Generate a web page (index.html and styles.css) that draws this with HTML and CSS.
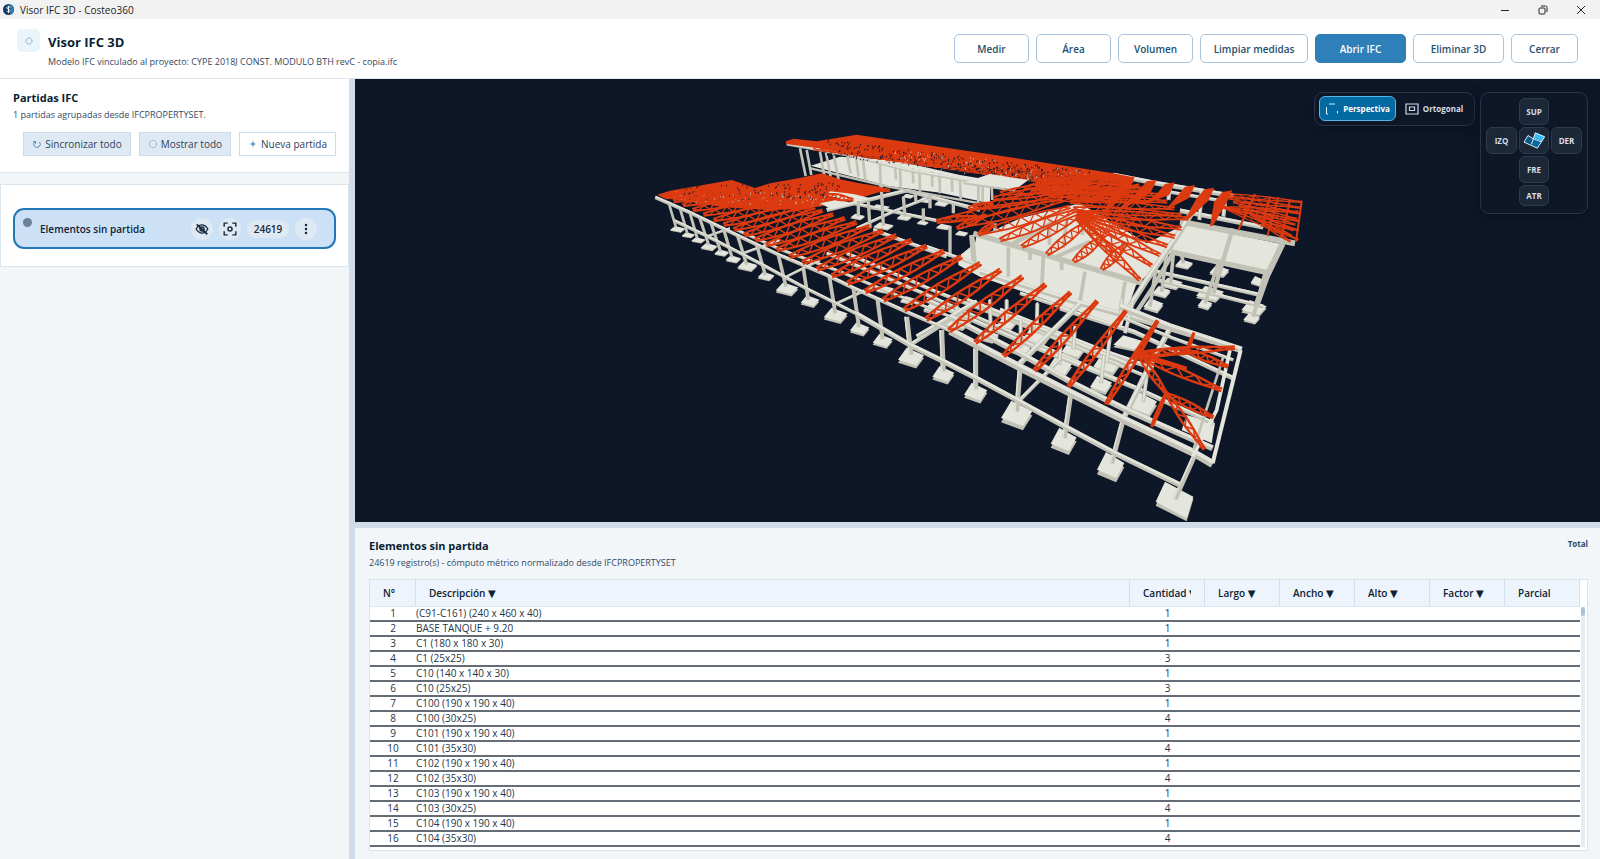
FILE: index.html
```html
<!DOCTYPE html>
<html lang="es">
<head>
<meta charset="utf-8">
<title>Visor IFC 3D - Costeo360</title>
<link rel="stylesheet" href="styles.css">
</head>
<body>
<div class="titlebar">
  <svg class="app-logo" viewBox="0 0 24 24" aria-hidden="true"><circle cx="12" cy="12" r="12" fill="#12395f"/><path d="M12 0a12 12 0 0 1 0 24c5-4 6-8 5-12S13 4 12 0z" fill="#2b7fb5"/><path d="M16 8c-1-2-7-3-8 0-.6 4 8 3 8 7-1 3-7 3-8 0M12 4v16" fill="none" stroke="#fff" stroke-width="2"/></svg>
  <span class="window-name">Visor IFC 3D - Costeo360</span>
  <div class="window-buttons">
    <button type="button" aria-label="Minimizar"><svg viewBox="0 0 10 10"><path d="M1 5.500h8"/></svg></button>
    <button type="button" aria-label="Restaurar"><svg viewBox="0 0 10 10"><rect x="1" y="3" width="6" height="6" rx="1"/><path d="M3 1h4.500a1.500 1.500 0 0 1 1.500 1.500V7"/></svg></button>
    <button type="button" aria-label="Cerrar ventana"><svg viewBox="0 0 10 10"><path d="M1 1l8 8M9 1L1 9"/></svg></button>
  </div>
</div>
<header class="app-header">
  <div class="app-icon"><svg viewBox="0 0 10 10"><circle cx="5" cy="5" r="3" fill="none" stroke="#6fa3d0" stroke-width="1" stroke-dasharray="1.400 .5"/></svg></div>
  <div class="app-heading">
    <h1>Visor IFC 3D</h1>
    <p>Modelo IFC vinculado al proyecto: CYPE 2018J CONST. MODULO BTH revC - copia.ifc</p>
  </div>
  <div class="actions">
    <button type="button">Medir</button>
    <button type="button">Área</button>
    <button type="button">Volumen</button>
    <button type="button" class="wide">Limpiar medidas</button>
    <button type="button" class="medium primary">Abrir IFC</button>
    <button type="button" class="medium">Eliminar 3D</button>
    <button type="button" class="small">Cerrar</button>
  </div>
</header>
<div class="workspace">
  <aside class="sidebar">
    <div class="sidebar-head">
      <h2>Partidas IFC</h2>
      <p>1 partidas agrupadas desde IFCPROPERTYSET.</p>
      <div class="sidebar-actions">
        <button type="button" class="soft"><svg viewBox="0 0 10 10"><path d="M3 2.500a3.300 3.300 0 1 0 4.500.5M1.200 2.500h2.300v2.300" fill="none" stroke="#4b8fc4" stroke-width="1"/></svg>Sincronizar todo</button>
        <button type="button" class="soft"><svg viewBox="0 0 10 10"><circle cx="5" cy="5" r="3.600" fill="none" stroke="#6fa3d0" stroke-width=".9" stroke-dasharray="1.300 .6"/></svg>Mostrar todo</button>
        <button type="button"><svg viewBox="0 0 10 10"><path d="M5 2.500v5M2.500 5h5" stroke="#2f7fb9" stroke-width="1.200"/></svg>Nueva partida</button>
      </div>
    </div>
    <div class="group-list">
      <div class="group-item">
        <span class="status-dot"></span>
        <span class="group-name">Elementos sin partida</span>
        <button type="button" class="round" aria-label="Ocultar"><svg viewBox="0 0 24 24"><path d="M2 12c3-5 6-7 10-7s7 2 10 7c-3 5-6 7-10 7s-7-2-10-7z"/><circle cx="12" cy="12" r="3.500"/><path d="M3 4l18 17" stroke-width="3"/></svg></button>
        <button type="button" class="round" aria-label="Enfocar"><svg viewBox="0 0 24 24"><path d="M2 8V2h6M16 2h6v6M22 16v6h-6M8 22H2v-6"/><circle cx="12" cy="12" r="3.500"/></svg></button>
        <span class="count">24619</span>
        <button type="button" class="round" aria-label="Más opciones"><svg viewBox="0 0 24 24" class="dots"><circle cx="12" cy="4" r="2.500"/><circle cx="12" cy="12" r="2.500"/><circle cx="12" cy="20" r="2.500"/></svg></button>
      </div>
    </div>
  </aside>
  <div class="splitter"></div>
  <main class="content">
    <section class="viewer">
      <svg id="model" class="model" viewBox="-855 -123 3735 1329" preserveAspectRatio="xMidYMid meet" role="img" aria-label="Modelo estructural"></svg>
      <div class="view-tools">
        <div class="projection">
          <button type="button" class="active"><svg viewBox="0 0 14 14"><path d="M4 2h6M1.500 5v7h1.500M12.500 9v2.500" stroke="#d7efff" stroke-width="1" fill="none"/></svg>Perspectiva</button>
          <button type="button"><svg viewBox="0 0 14 14"><path d="M1 2h12v10H1zM4.500 5h5v3.500h-5z" stroke="#cfd9e5" stroke-width="1.200" fill="none"/></svg>Ortogonal</button>
        </div>
        <div class="compass">
          <button type="button" class="sup">SUP</button>
          <button type="button" class="izq">IZQ</button>
          <button type="button" class="iso" aria-label="Isométrica"><svg viewBox="0 0 66 50"><path d="M15 10L31 20 26 37 3 30z" fill="#075985"/><path d="M37 1l28 12-8 15-26-10z" fill="#38bdf8"/><path d="M31 21l22 9-10 18-18-11z" fill="#0369a1"/><path d="M15 10l16 10 6-18 28 12-22 34L3 30zM31 20l24 9M31 20l-6 17" fill="none" stroke="#d7efff" stroke-width="3"/></svg></button>
          <button type="button" class="der">DER</button>
          <button type="button" class="fre">FRE</button>
          <button type="button" class="atr">ATR</button>
        </div>
      </div>
    </section>
    <div class="splitter-row"></div>
    <section class="records">
      <div class="records-head">
        <div>
          <h2>Elementos sin partida</h2>
          <p>24619 registro(s) - cómputo métrico normalizado desde IFCPROPERTYSET</p>
        </div>
        <span class="total">Total</span>
      </div>
      <div class="table-frame">
        <table>
          <colgroup><col class="c-num"><col><col class="c-val"><col class="c-val"><col class="c-val"><col class="c-val"><col class="c-val"><col class="c-val"></colgroup>
          <thead><tr>
            <th>N°</th>
            <th><button type="button">Descripción ▼</button></th>
            <th><button type="button">Cantidad ▼</button></th>
            <th><button type="button">Largo ▼</button></th>
            <th><button type="button">Ancho ▼</button></th>
            <th><button type="button">Alto ▼</button></th>
            <th><button type="button">Factor ▼</button></th>
            <th>Parcial</th>
          </tr></thead>
          <tbody>
            <tr><td>1</td><td>(C91-C161) (240 x 460 x 40)</td><td>1</td><td></td><td></td><td></td><td></td><td></td></tr>
            <tr><td>2</td><td>BASE TANQUE + 9.20</td><td>1</td><td></td><td></td><td></td><td></td><td></td></tr>
            <tr><td>3</td><td>C1 (180 x 180 x 30)</td><td>1</td><td></td><td></td><td></td><td></td><td></td></tr>
            <tr><td>4</td><td>C1 (25x25)</td><td>3</td><td></td><td></td><td></td><td></td><td></td></tr>
            <tr><td>5</td><td>C10 (140 x 140 x 30)</td><td>1</td><td></td><td></td><td></td><td></td><td></td></tr>
            <tr><td>6</td><td>C10 (25x25)</td><td>3</td><td></td><td></td><td></td><td></td><td></td></tr>
            <tr><td>7</td><td>C100 (190 x 190 x 40)</td><td>1</td><td></td><td></td><td></td><td></td><td></td></tr>
            <tr><td>8</td><td>C100 (30x25)</td><td>4</td><td></td><td></td><td></td><td></td><td></td></tr>
            <tr><td>9</td><td>C101 (190 x 190 x 40)</td><td>1</td><td></td><td></td><td></td><td></td><td></td></tr>
            <tr><td>10</td><td>C101 (35x30)</td><td>4</td><td></td><td></td><td></td><td></td><td></td></tr>
            <tr><td>11</td><td>C102 (190 x 190 x 40)</td><td>1</td><td></td><td></td><td></td><td></td><td></td></tr>
            <tr><td>12</td><td>C102 (35x30)</td><td>4</td><td></td><td></td><td></td><td></td><td></td></tr>
            <tr><td>13</td><td>C103 (190 x 190 x 40)</td><td>1</td><td></td><td></td><td></td><td></td><td></td></tr>
            <tr><td>14</td><td>C103 (30x25)</td><td>4</td><td></td><td></td><td></td><td></td><td></td></tr>
            <tr><td>15</td><td>C104 (190 x 190 x 40)</td><td>1</td><td></td><td></td><td></td><td></td><td></td></tr>
            <tr><td>16</td><td>C104 (35x30)</td><td>4</td><td></td><td></td><td></td><td></td><td></td></tr>
          </tbody>
        </table>
        <div class="scroll-track"><div class="scroll-thumb"></div></div>
      </div>
    </section>
  </main>
</div>
<script src="model.js"></script>
</body>
</html>
```
FILE: styles.css
```css
* { box-sizing: border-box; }
body {
  margin: 0;
  height: 100vh;
  display: flex;
  flex-direction: column;
  overflow: hidden;
  font-family: "Open Sans", "DejaVu Sans", sans-serif;
  font-size: 10px;
  color: #1f3448;
  background: #f2f6f9;
}
h1, h2, p { margin: 0; }
h1 { font-size: 13px; line-height: 20px; color: #0b1f33; }
h2 { font-size: 11px; line-height: 16px; color: #0b1f33; }
p { font-size: 9px; line-height: 18px; color: #33495f; }
button { font: inherit; color: inherit; padding: 0; cursor: pointer; white-space: nowrap; }

.titlebar { display: flex; align-items: center; height: 19px; flex: none; padding-left: 3px; background: #f2f2f2; }
.app-logo { width: 11px; height: 11px; margin-right: 6px; }
.window-name { color: #222; }
.window-buttons { margin-left: auto; display: flex; padding-right: 9px; gap: 18px; }
.window-buttons button { width: 20px; height: 17px; border: 0; background: none; display: grid; place-items: center; }
.window-buttons svg { width: 10px; height: 10px; fill: none; stroke: #222; }

.app-header { display: flex; align-items: flex-start; height: 60px; flex: none; padding: 10px 22px 0 17px; background: #fff; border-bottom: 1px solid #dfe8f0; }
.app-icon { width: 23px; height: 23px; border-radius: 5px; background: #e9f4fb; display: grid; place-items: center; margin-right: 8px; }
.app-icon svg { width: 10px; height: 10px; }
.app-heading { padding-top: 3px; }
.app-heading p { margin-top: 1px; }
.actions { margin-left: auto; padding-top: 5px; display: flex; gap: 7px; }
.actions button { width: 75px; height: 29px; border: 1px solid #a9c4da; border-radius: 5px; background: #fff; color: #24506f; font-weight: 600; }
.actions .wide { width: 108px; }
.actions .medium { width: 91px; }
.actions .small { width: 67px; }
.actions .primary { background: #2f80b9; border-color: #2f80b9; color: #fff; }

.workspace { flex: 1; min-height: 0; display: flex; }
.sidebar { width: 349px; flex: none; }
.sidebar-head { padding: 11px 13px 16px; background: #fff; border-bottom: 1px solid #dbe5ee; }
.sidebar-actions { display: flex; justify-content: flex-end; gap: 8px; margin-top: 8px; }
.sidebar-actions button { height: 24px; padding: 0 8px; display: flex; align-items: center; gap: 3px; border: 1px solid #cddceb; background: #fff; color: #2b4258; }
.sidebar-actions .soft { background: #dfe9f4; }
.sidebar-actions svg { width: 10px; height: 10px; }
.group-list { margin-top: 11px; padding: 23px 12px 17px; background: #fff; border: 1px solid #dbe5ee; }
.group-item { position: relative; display: flex; align-items: center; height: 41px; padding: 0 17px 0 25px; gap: 6px; border: 2px solid #2279b5; border-radius: 11px; background: #cce1f6; }
.status-dot { position: absolute; left: 8px; top: 8px; width: 9px; height: 9px; border-radius: 50%; background: #6b8199; }
.group-name { flex: 1; font-weight: 600; color: #0f2233; }
.round { width: 22px; height: 22px; border: 0; border-radius: 50%; background: #dfe9f3; display: grid; place-items: center; }
.round svg { width: 14px; height: 14px; fill: none; stroke: #16293b; stroke-width: 2.4; }
.round .dots { width: 12px; height: 12px; fill: #16293b; stroke: none; }
.count { width: 42px; height: 18px; line-height: 18px; border-radius: 9px; background: #dfe9f3; text-align: center; font-weight: 600; color: #16293b; }

.splitter { width: 6px; flex: none; background: #d0dce8; }
.splitter-row { height: 6px; flex: none; background: #d0dce8; }
.content { flex: 1; min-width: 0; display: flex; flex-direction: column; }
.viewer { position: relative; flex: 1; min-height: 0; overflow: hidden; background: #0e1728; }
.model { display: block; width: 100%; height: 100%; }
.view-tools { position: absolute; top: 13px; right: 12px; display: flex; align-items: flex-start; gap: 5px; font-size: 8px; font-weight: 700; color: #d5deea; }
.projection { display: flex; gap: 2px; padding: 3px 4px 4px; border: 1px solid #283448; border-radius: 9px; background: #0e1728; box-shadow: 0 4px 14px #0a1120; }
.projection button { display: flex; align-items: center; justify-content: center; gap: 4px; width: 72px; height: 25px; border: 1px solid transparent; border-radius: 6px; background: none; font-weight: 700; }
.projection .active { width: 77px; background: #0369a1; border-color: #56b4e6; color: #fff; }
.projection svg { width: 14px; height: 14px; }
.compass { display: grid; grid-template-columns: 31px 30px 31px; grid-template-rows: 27px 27px 27px 21px; gap: 2px; padding: 5px 5px 7px; border: 1px solid #283448; border-radius: 9px; background: #0e1728; box-shadow: 0 4px 14px #0a1120; }
.compass button { border: 1px solid #2e3b4e; border-radius: 6px; background: #1c2738; }
.compass .sup { grid-area: 1 / 2; }
.compass .izq { grid-area: 2 / 1; }
.compass .iso { grid-area: 2 / 2; display: grid; place-items: center; }
.compass .der { grid-area: 2 / 3; }
.compass .fre { grid-area: 3 / 2; }
.compass .atr { grid-area: 4 / 2; }
.compass svg { width: 22px; height: 17px; }

.records { flex: none; padding: 10px 12px 8px 14px; }
.records-head { display: flex; justify-content: space-between; align-items: flex-start; margin-bottom: 7px; }
.total { font-size: 8px; line-height: 12px; font-weight: 700; color: #33485c; }
.table-frame { display: flex; border: 1px solid #d8e4ef; background: #fff; padding-bottom: 3px; }
table { flex: 1; width: 0; table-layout: fixed; border-collapse: separate; border-spacing: 0; }
.c-num { width: 46px; }
.c-val { width: 75px; }
th { height: 27px; padding: 0 13px; text-align: left; font-weight: 600; color: #0f2233; background: #edf4fb; border-right: 1px solid #d3e0ec; border-bottom: 1px solid #dce7f1; }
th button { display: block; width: 100%; border: 0; background: none; text-align: left; font-weight: 600; overflow: hidden; }
td { height: 15px; padding: 0; line-height: 13px; border-bottom: 2px solid #666c75; color: #22364a; white-space: nowrap; text-align: center; }
td:nth-child(2) { text-align: left; }
.scroll-track { width: 4px; margin: 27px 2px 0 1px; background: #e3edf6; }
.scroll-thumb { height: 9px; border-radius: 2px; background: #a9c3da; }
```
FILE: model.js
```js
const LIGHT = '#e4e5dc', SHADE = '#c2c2b6', RED = '#dc3a10', DARK = '#0e1728';
const out = [];
const pts = (a, dx = 0, dy = 0) => a.map(p => (p[0] + dx) + ',' + (p[1] + dy)).join(' ');
const poly = (a, fill, dx, dy) => out.push(`<polygon points="${pts(a, dx, dy)}" fill="${fill}"/>`);
const line = (a, w, color, dx, dy) => out.push(`<polyline points="${pts(a, dx, dy)}" fill="none" stroke="${color}" stroke-width="${w}"/>`);
const beam = (a, w, dx = 0, dy = 0) => { line(a, w, SHADE, dx, dy); line(a, w * .45, LIGHT, dx, dy - w * .25); };
const foot = (x, y, w, h, dx = 0, dy = 0) => {
  const r = [[x - w / 2, y + h * .15], [x - w * .17, y - h / 2], [x + w / 2, y - h * .1], [x + w * .2, y + h * .45]];
  poly(r, SHADE, dx, dy + h * .16);
  poly(r, LIGHT, dx, dy);
};
const truss = (x1, y1, x2, y2, d, n, w = 5) => {
  const L = Math.hypot(x2 - x1, y2 - y1), nx = -(y2 - y1) / L, ny = (x2 - x1) / L;
  const top = [], bot = [], web = [];
  for (let i = 0; i <= n; i++) {
    const t = i / n, k = d * (.35 + .65 * Math.sin(Math.PI * Math.min(t * 1.1, 1)));
    const x = x1 + (x2 - x1) * t, y = y1 + (y2 - y1) * t;
    const a = [x + nx * k / 2, y + ny * k / 2], b = [x - nx * k / 2, y - ny * k / 2];
    top.push(a); bot.push(b); web.push(i % 2 ? a : b);
  }
  line(top, w, RED); line(bot, w, RED); line(web, w * .7, RED);
};
let seed = 7;
const rnd = () => (seed = (seed * 16807) % 2147483647) / 2147483647;
const specks = (x1, y1, x2, y2, spread, n, color) => {
  for (let i = 0; i < n; i++) {
    const t = rnd(), x = x1 + (x2 - x1) * t, y = y1 + (y2 - y1) * t + (rnd() - .5) * spread;
    poly([[x, y], [x + 4, y - 3], [x + 3, y + 4]], color);
  }
};

/* Rear footings, ground beams and columns */
[[653,290,44,18],[730,318,62,22],[793,292,46,18],[848,308,36,14],[855,240,40,16],[905,250,44,18],[805,228,36,14],[965,340,40,16],[912,320,48,18],[735,508,54,24],[805,540,50,24],[878,567,56,28],[955,605,70,34],[720,262,60,18]].forEach(f => foot(...f));
[[612,432,54,28],[718,453,60,34],[832,483,40,30],[575,490,66,34],[545,515,54,34],[520,555,60,42],[675,553,44,30],[690,520,84,46],[822,563,76,46],[815,595,50,30]].forEach(f => foot(...f, 1020, 0));
[[400,25,60,28],[470,65,90,46],[565,108,64,38],[620,70,60,38],[662,145,62,42],[712,105,84,60],[820,148,72,52],[779,198,74,58],[922,190,84,62],[903,253,66,52],[1030,312,82,72],[985,128,90,44]].forEach(f => foot(...f, 480, 540));
poly([[1160,345],[1245,370],[1235,430],[1145,390]], LIGHT, 480, 540);
beam([[560,270],[800,212],[1020,270]], 12);
beam([[640,250],[890,302]], 10);
beam([[650,325],[760,275],[860,235]], 9);
[[655,240,655,290],[685,245,690,325],[720,130,730,318],[790,230,795,290],[825,215,828,245],[850,265,850,305],[870,225,870,265],[930,320,930,410],[940,250,940,280]].forEach(c => line([[c[0],c[1]],[c[2],c[3]]], 10, SHADE));
[[530,455,840,525],[530,480,850,560]].forEach(c => beam([[c[0],c[1]],[c[2],c[3]]], 12, 1020));
[[560,400,545,515],[580,400,572,490],[530,430,510,560],[605,405,610,430],[715,430,675,550],[855,460,820,590],[625,330,605,365]].forEach(c => line([[c[0],c[1]],[c[2],c[3]]], 11, SHADE, 1020));

/* Rear block: slab wall and columns */
poly([[512,137],[600,110],[760,120],[960,165],[1050,180],[1050,250],[900,218],[745,198]], LIGHT);
line([[512,145],[745,200],[1020,250]], 7, SHADE);
[[480,85,497,168],[500,90,514,165],[540,95,553,168],[558,98,572,170],[580,100,596,180],[622,108,632,160],[648,112,656,170],[668,115,676,180],[720,125,722,200],[765,135,768,178],[780,140,782,200],[818,145,820,190],[838,150,840,215],[876,155,877,200],[898,160,900,220],[935,170,937,215],[960,175,962,240],[1015,195,1015,250],[1028,200,1028,250],[1055,200,1057,240]].forEach(c => line([[c[0],c[1]],[c[2],c[3]]], 8, SHADE));
beam([[440,72],[620,104],[800,150],[1000,185]], 9);

/* Right slab and frame */
poly([[610,312],[905,372],[862,460],[572,395]], LIGHT, 1020);
line([[600,305],[945,370]], 18, SHADE, 1020);
line([[570,395],[862,458]], 16, SHADE, 1020);
line([[758,325],[700,520]], 13, SHADE, 1020);
line([[908,370],[860,470],[828,560]], 18, SHADE, 1020);
beam([[400,165],[530,190],[760,228]], 14, 1020);
beam([[560,215],[740,245]], 10, 1020);
beam([[600,272],[850,322]], 14, 1020);
[[665,215,658,300],[570,200,565,240],[735,250,730,290]].forEach(c => beam([[c[0],c[1]],[c[2],c[3]]], 12, 1020));

/* Central hall */
poly([[10,345],[120,295],[300,250],[500,370],[600,320],[570,400],[470,495]], LIGHT, 1020);
poly([[955,410],[1005,370],[1010,345],[1490,490],[1445,620],[1020,470],[955,435]], LIGHT);
line([[-20,340],[230,415],[490,490]], 16, SHADE, 1020);
line([[-25,345],[-15,450]], 16, SHADE, 1020);
[[85,382,85,470],[190,410,185,515],[315,455,300,545],[435,485,420,585],[150,385,150,420],[245,415,245,450],[210,300,208,375],[260,300,250,385],[307,320,307,345],[45,310,45,335]].forEach(c => line([[c[0],c[1]],[c[2],c[3]]], 11, SHADE, 1020));
line([[100,370],[215,310]], 14, SHADE, 1020);
line([[230,410],[330,365]], 12, SHADE, 1020);
beam([[430,590],[500,480],[590,350],[660,240]], 18, 1020);
line([[470,575],[520,500],[578,400]], 13, SHADE, 1020);
beam([[0,455],[300,550],[450,590],[700,665]], 16, 1020);

/* Front wing: inner grid */
[[[860,380],[1000,430]],[[620,400],[900,520],[1160,620],[1520,770]],[[700,330],[920,410]],[[1140,520],[1290,570]],[[560,400],[850,520],[1120,640],[1480,800]]].forEach(b => beam(b, 11));
[[[780,25],[1000,95],[1300,235]],[[600,30],[900,150],[1060,205]],[[380,0],[700,140],[1010,265],[1240,370]],[[500,0],[780,110],[1000,200]]].forEach(b => beam(b, 14, 480, 540));
[[470,10,470,60],[570,0,572,100],[662,60,662,145],[712,10,710,100],[825,80,820,148],[782,110,779,195],[932,90,920,190],[912,170,903,250],[1045,190,1030,305],[620,0,620,65],[965,0,960,60],[1000,0,975,100]].forEach(c => beam([[c[0],c[1]],[c[2],c[3]]], 12, 480, 540));
beam([[840,12],[650,200]], 17, 480, 540);
beam([[480,40],[335,132]], 12, 480, 540);
beam([[780,178],[658,302]], 12, 480, 540);
beam([[1110,85],[1040,215],[968,360]], 17, 480, 540);
beam([[310,400],[420,360]], 8);
beam([[440,470],[540,420]], 8);
beam([[200,350],[270,325]], 7);
beam([[580,555],[700,500]], 9);
beam([[1010,545],[830,650]], 14);

/* Front wing: outer grid */
[[113,327,46,18],[145,345,40,16],[175,360,42,17],[207,380,50,22],[245,398,44,20],[280,417,46,22],[322,438,60,30],[378,468,50,26],[441,506,68,38],[510,543,56,34],[587,585,72,44],[659,626,58,38],[728,662,60,40],[813,711,78,56],[910,763,66,50],[1007,816,70,56],[1130,882,94,80],[1271,960,78,74],[1412,1037,82,82]].forEach(f => foot(...f));
poly([[1095,545],[1180,590],[1160,657],[1067,610]], SHADE, 480, 547);
poly([[1095,545],[1180,590],[1160,655],[1067,605]], LIGHT, 480, 540);
[[85,245,108,322],[120,265,142,340],[150,280,172,355],[178,290,206,375],[213,310,242,395],[250,325,276,412],[292,345,320,434],[350,375,376,465],[415,405,438,500],[490,445,505,540],[568,470,586,580],[640,505,657,622],[712,535,728,658]].forEach((c, i) => line([[c[0],c[1]],[c[2],c[3]]], 8 + i / 3, SHADE));
[[320,50,333,165],[425,90,430,215],[527,145,527,268],[660,210,650,335],[812,285,793,415],[968,365,935,490],[1182,470,1125,598]].forEach(c => { line([[c[0],c[1]],[c[2],c[3]]], 15, SHADE, 480, 540); line([[c[0] - 5,c[1]],[c[2] - 5,c[3]]], 4, LIGHT, 480, 540); });
beam([[103,302],[200,348],[275,386],[370,436],[440,474],[500,506],[580,546],[650,582]], 10);
beam([[170,42],[335,138],[430,184],[527,234],[650,300],[795,380],[945,460],[1140,555]], 16, 480, 540);
beam([[46,232],[150,278],[250,326],[350,374],[420,406],[560,465],[640,504],[800,576],[930,632]], 11);
beam([[290,330],[430,392],[600,455],[700,497],[930,590]], 9);
beam([[450,92],[525,132],[660,202],[810,278],[970,358],[1180,458],[1238,492]], 24, 480, 540);
beam([[450,50],[660,160],[820,250],[980,330],[1238,445]], 18, 480, 540);
beam([[960,20],[1110,80],[1325,150]], 20, 480, 540);
beam([[960,50],[1120,115],[1300,180]], 10, 480, 540);
line([[1322,150],[1238,490]], 12, LIGHT, 480, 540);
line([[1290,150],[1250,330],[1178,470]], 11, LIGHT, 480, 540);
line([[1270,170],[1180,450]], 8, SHADE, 480, 540);

/* Roof trusses, rear block */
poly([[438,64],[460,56],[530,64],[650,44],[1020,98],[1420,160],[1480,172],[1470,190],[1300,165],[1160,150],[960,138],[860,140],[780,118],[620,98],[530,84],[438,72]], RED);
for (let i = 0; i < 30; i++) {
  const x = 520 + i * 24, y = 88 + i * 3.4;
  truss(x, y, x + 140, y - 20 + i * .4, 16, 8, 4);
}
specks(560, 84, 1350, 180, 50, 330, DARK);
specks(760, 110, 1350, 182, 50, 90, SHADE);
for (let i = 0; i < 9; i++) truss(1150 + i * 22, 205 + i * 5, 1330 + i * 24, 160 + i * 5, 16, 12, 4.5);
for (let i = 0; i < 5; i++) truss(1180 + i * 8, 180 + i * 14, 1480 + i * 12, 185 + i * 15, 14, 16, 4.5);
poly([[970,188],[1050,162],[1165,180],[1125,210]], LIGHT);
line([[970,190],[1125,212]], 6, SHADE);

/* Roof trusses, central fan */
[[465,172,360,290],[530,182,400,280],[585,190,490,250],[645,198,560,265],[703,206,615,300],[757,214,690,318]].forEach(t => {
  const [x1, y1, x2, y2] = [t[0] + 1020, t[1], t[2] + 1020, t[3]];
  poly([[x1, y1 - 3], [x1 - 30, y1 + 2], [x1 - 55, y1 + 32], [x2, y2], [x2 + 8, y2], [x1 - 18, y1 + 36]], RED);
});
[[625,295],[605,325],[585,350],[562,378],[540,405],[515,437],[480,480]].forEach(p => truss(1310, 255 + p[1] * .08, p[0] + 1020, p[1], 24, 14, 5.5));
[[365,448,440,370],[280,425,375,345],[200,403,330,300],[125,380,310,280],[60,360,290,270],[0,340,270,260],[-40,315,250,240],[-130,305,200,240],[-20,265,260,215],[40,235,300,200],[60,220,330,185]].forEach(t => truss(t[0] + 1020, t[1], t[2] + 1020, t[3], 25, 13, 5.5));
[[1270,205],[1280,225],[1290,245],[1300,265]].forEach((p, i) => truss(p[0], p[1], 1560 + i * 22, 225 + i * 20, 20, 16, 5));
truss(1310, 290, 1420, 400, 20, 7, 6);
for (let i = 0; i < 8; i++) truss(1745 + i * 17, 222 + i * 12, 1986 - i * 5, 246 + i * 17, 10, 10, 4);
for (let i = 0; i < 4; i++) truss(1750, 262, 1975, 275 + i * 28, 10, 12, 3.5);
line([[965,243],[948,365]], 6, RED, 1020);
[[825,222,775,330],[895,232,862,348],[930,240,905,350],[870,230,845,320]].forEach(t => line([[t[0],t[1]],[t[2],t[3]]], 6, RED, 1020));

/* Roof trusses, front wing */
poly([[52,224],[90,212],[275,180],[345,204],[390,190],[480,174],[545,160],[600,178],[745,208],[700,222],[640,240],[570,255],[480,268],[380,270],[250,262],[150,245],[70,234]], RED);
specks(130, 222, 600, 212, 50, 150, DARK);
specks(100, 230, 560, 242, 36, 90, SHADE);
poly([[570,214],[640,222],[690,234],[640,246],[560,225]], LIGHT);
poly([[540,250],[600,238],[640,252],[575,268]], LIGHT);
const wing = [[75,232,230,205],[100,243,280,210],[128,255,330,215],[158,270,380,225],[190,284,420,235],[220,300,460,245],[250,314,500,255],[280,328,525,262],[312,345,548,272],[345,360,580,283],[378,375,615,295],[410,390,650,307],[448,410,690,319],[487,428,730,332],[530,448,770,346],[575,468,815,360],[622,490,860,378],[675,515,912,393],[730,540,965,410],[792,570,1022,430],[858,598,1082,450],[927,632,1148,470],[1005,668,1217,493],[1090,708,1292,517],[1183,752,1372,543],[1285,800,1458,572],[1398,853,1553,602]];
wing.forEach((t, i) => truss(...t, i < 22 ? 18 + i * .5 : 25 - (i - 22) * 2, 13, 5.5 + i * .08));
[[560,225,640,240],[600,195,750,212],[890,303,1010,290],[950,325,1040,285],[985,265,1060,250],[1015,345,1060,310]].forEach(t => truss(...t, 16, 7, 6));

/* End fan */
[[1015,160,1305,143,20],[1015,165,1265,270,24],[1160,152,1285,200,18],[1020,170,1100,282,18],[1100,282,1240,352,18],[1100,282,1213,448,18],[1055,380,1100,275,8],[1160,155,1182,98,6],[1010,165,1160,205,10],[1000,180,1073,62,10],[1015,165,1170,150,20]].forEach(t => truss(t[0] + 480, t[1] + 540, t[2] + 480, t[3] + 540, t[4], 9, 7));
document.getElementById('model').innerHTML = out.join('');
```
